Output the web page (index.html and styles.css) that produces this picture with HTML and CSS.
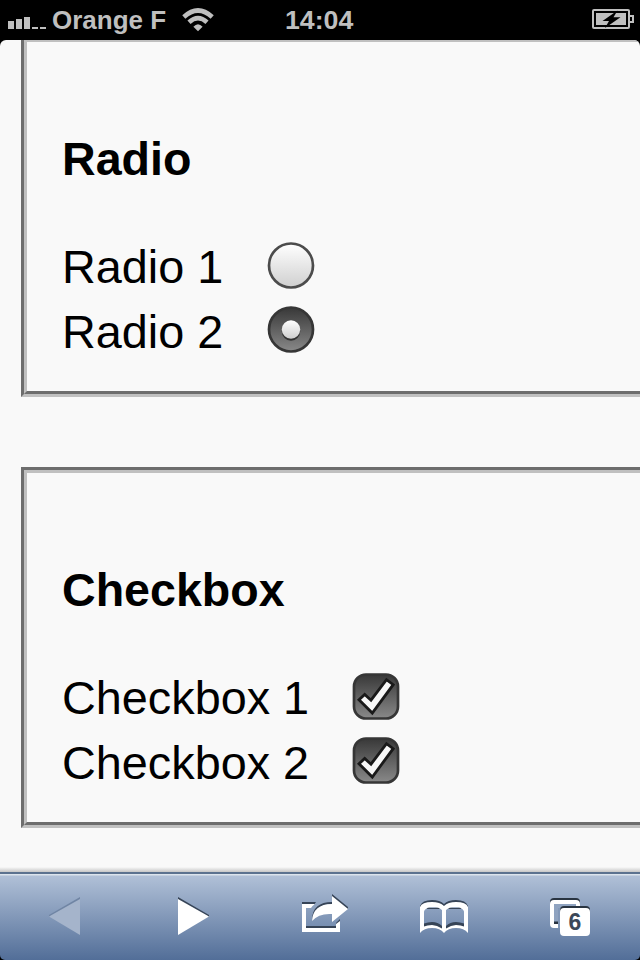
FILE: index.html
```html
<!DOCTYPE html>
<html lang="en">
<head>
<meta charset="utf-8">
<title>Radio and checkbox</title>
<link rel="stylesheet" href="styles.css">
</head>
<body>
<header class="status">
  <div class="carrier">
    <svg width="38" height="12" viewBox="0 0 38 12" fill="#bfbfbf"><path d="M0 4h6v8H0zM8 2h6v10H8zM16 0h6v12h-6zM24 10h6v2h-6zM32 10h6v2h-6z"/></svg>
    <span class="name">Orange F</span>
    <svg class="wifi" width="32" height="24" viewBox="0 0 32 24"><g fill="none" stroke="#bfbfbf" stroke-width="4.6"><path d="M1.8 9Q16 -4 30.2 9"/><path d="M7 14.3Q16 6 25 14.3"/></g><path d="M11.4 18.7Q16 13.6 20.6 18.7L16 23.3Z" fill="#bfbfbf"/></svg>
  </div>
  <div class="time">14:04</div>
  <svg class="battery" width="42" height="20" viewBox="0 0 42 20"><rect x="1" y="1" width="36" height="18" rx="1" fill="none" stroke="#bfbfbf" stroke-width="2"/><path d="M4 4h30v12H4z" fill="#bfbfbf"/><path d="M38 7h3v6h-3" fill="none" stroke="#bfbfbf" stroke-width="2"/><path d="M25.5 1.5L10.5 12h6.5L13 19L28.5 8.3h-7Z" fill="#000"/></svg>
</header>
<main class="page">
  <section class="box"><div class="inner">
    <h3>Radio</h3>
    <div class="row"><label class="radio-label">Radio 1</label>
      <svg class="control" width="48" height="47" viewBox="0 0 48 47"><defs><linearGradient id="light" x2="0" y2="1"><stop stop-color="#fff"/><stop offset="1" stop-color="#cfcfcf"/></linearGradient></defs><circle cx="24" cy="23.5" r="22" fill="url(#light)" stroke="#4c4c4c" stroke-width="2.7"/></svg>
    </div>
    <div class="row"><label class="radio-label">Radio 2</label>
      <svg class="control" width="48" height="47" viewBox="0 0 48 47"><defs><linearGradient id="dark" x2="0" y2="1"><stop stop-color="#383838"/><stop offset="1" stop-color="#898989"/></linearGradient></defs><circle cx="24" cy="23.5" r="22" fill="url(#dark)" stroke="#363636" stroke-width="2.7"/><circle cx="24" cy="25.5" r="9.2" fill="#333"/><circle cx="24" cy="23.5" r="9.2" fill="url(#light)"/></svg>
    </div>
  </div></section>
  <section class="box"><div class="inner">
    <h3>Checkbox</h3>
    <div class="row"><label class="check-label">Checkbox 1</label>
      <svg class="control" width="48" height="47" viewBox="0 0 48 47"><rect x="2" y="1.5" width="44" height="44" rx="12" fill="url(#dark)" stroke="#363636" stroke-width="2.7"/><path d="M7 26.8L12.7 21.5L19 27.2L34.5 6.7L41.2 11.7L20.3 40Z" fill="#f7f7f7" stroke="#191919" stroke-width="2.8"/></svg>
    </div>
    <div class="row"><label class="check-label">Checkbox 2</label>
      <svg class="control" width="48" height="47" viewBox="0 0 48 47"><rect x="2" y="1.5" width="44" height="44" rx="12" fill="url(#dark)" stroke="#363636" stroke-width="2.7"/><path d="M7 26.8L12.7 21.5L19 27.2L34.5 6.7L41.2 11.7L20.3 40Z" fill="#f7f7f7" stroke="#191919" stroke-width="2.8"/></svg>
    </div>
  </div></section>
</main>
<nav class="toolbar">
  <svg class="back" width="31" height="38" viewBox="0 0 31 38"><path d="M31 0v3L0 20v-2Z" fill="#7085a4"/><path d="M31 2v36L0 19.5Z" fill="#a5b4cb"/></svg>
  <svg class="forward" width="31" height="38" viewBox="0 0 31 38"><path d="M0 0v3l31 17v-2Z" fill="#364457"/><path d="M0 2v36l31-18.5Z" fill="#fff"/></svg>
  <svg class="share" width="46" height="39" viewBox="0 0 46 39"><path d="M0 8h14l-2 3H0zM4 32h30v3H4zM34 29l4-4v3l-4 3ZM10 25Q11 8 30 8V0L46 13v2L30 6v4Q13 10 10 27Z" fill="#364457"/><path d="M0 10h13q-3 2-4 4H4v20h30v-4l4-3v11H0ZM30 2L46 15L30 28v-8Q17 19 10 27Q11 10 30 10Z" fill="#fff"/></svg>
  <svg class="book" width="48" height="34" viewBox="0 0 48 34"><path d="M0 6Q2 0 12 0Q20 0 24 4Q28 0 36 0Q46 0 48 6V9H0Z" fill="#364457"/><path d="M4 12Q6 7 13 7Q19 7 22 10H26Q29 7 35 7Q42 7 44 12V8H4Z" fill="#a5b6cf"/><path fill-rule="evenodd" d="M0 7Q2 2 12 2Q20 2 24 6Q28 2 36 2Q46 2 48 7V33Q44 28 36 28Q28 28 24 33Q20 28 12 28Q4 28 0 33ZM4 11Q6 7 13 7Q19 7 22 10V28Q17 24 12 24Q7 24 4 26ZM44 11Q42 7 35 7Q29 7 26 10V28Q31 24 36 24Q41 24 44 26Z" fill="#fff"/><path d="M4 23.5Q8 22 12 22Q18 22 22 26V28.5Q17 25 12 25Q7 25 4 26.5ZM44 23.5Q40 22 36 22Q30 22 26 26V28.5Q31 25 36 25Q41 25 44 26.5Z" fill="#364457"/></svg>
  <div class="tabs">
    <svg width="40" height="38" viewBox="0 0 40 38"><rect x="0" y="0" width="30" height="28" rx="4" fill="#293441"/><path d="M4 6h22v20H4Z" fill="#8fa3c0"/><path fill-rule="evenodd" d="M4 2h22q4 0 4 4v6H10v18H4q-4 0-4-4V6q0-4 4-4M4 6v20h4V10h18V6Z" fill="#fff"/><path d="M4 6h22v3H10v15H4Z" fill="#8fa3c0"/><path d="M4 23.5h4v2.5H4z" fill="#293441"/><path d="M8 10h2v20H8z" fill="#8298b8"/><rect x="10" y="8" width="30" height="28" rx="4" fill="#293441"/><rect x="10" y="10" width="30" height="28" rx="4" fill="#fff"/></svg>
    <span class="count">6</span>
  </div>
</nav>
</body>
</html>
```
FILE: styles.css
```css
* { box-sizing: border-box; }
body {
  margin: 0;
  width: 640px;
  height: 960px;
  overflow: hidden;
  background: #000;
  font-family: "Liberation Sans", Arial, sans-serif;
}
svg { display: block; flex: none; }
.status {
  height: 40px;
  padding: 0 6px 0 8px;
  display: grid;
  grid-template-columns: 277px 1fr auto;
  color: #bfbfbf;
  font-size: 26px;
  font-weight: bold;
  line-height: 40px;
}
.carrier { display: flex; }
.carrier > svg:first-child { margin-top: 17px; }
.name { margin-left: 6px; width: 114px; white-space: nowrap; }
.carrier .wifi { margin: 8px 0 0 16px; }
.time { font-size: 26.7px; }
.battery { margin-top: 9px; }
.page {
  height: 832px;
  padding-left: 21px;
  overflow: hidden;
  background: linear-gradient(#f9f9f9 calc(100% - 5px), #c6c6c6) #f9f9f9;
  border-radius: 6px 6px 0 0;
}
.box {
  width: 680px;
  height: 361px;
  margin-bottom: 70px;
  border: 3px solid;
  border-color: #6d6d6d #c0c0c0 #c0c0c0 #6d6d6d;
}
.box:first-child { margin-top: -4px; }
.inner {
  height: 100%;
  padding: 90px 0 0 35px;
  border: 3px solid;
  border-color: #c0c0c0 #6d6d6d #6d6d6d #c0c0c0;
}
h3 {
  margin: 0 0 49px;
  font-size: 46.6px;
  line-height: 54px;
}
.row {
  display: flex;
  height: 65px;
  font-size: 46.8px;
  line-height: 65px;
}
.radio-label { width: 205px; }
.check-label { width: 290px; }
.control { margin-top: 7px; }
.row + .row .control { margin-top: 6px; }
.toolbar {
  height: 88px;
  padding-left: 49px;
  display: flex;
  align-items: flex-start;
  border-top: 2px solid #5b728f;
  border-radius: 0 0 5px 5px;
  background: linear-gradient(#dce4ed 0 1px, #c5d1e0 1px 2px, #b0c0d7 2px, #526e98 100%);
}
.back { margin-top: 23px; }
.forward { margin: 23px 0 0 98px; }
.share { margin: 20px 0 0 93px; }
.book { margin: 26px 0 0 72px; }
.tabs { position: relative; margin: 24px 0 0 82px; }
.count {
  position: absolute;
  left: 10px;
  top: 10px;
  width: 30px;
  color: #3c4858;
  font-size: 23px;
  font-weight: bold;
  line-height: 28px;
  text-align: center;
}
```
